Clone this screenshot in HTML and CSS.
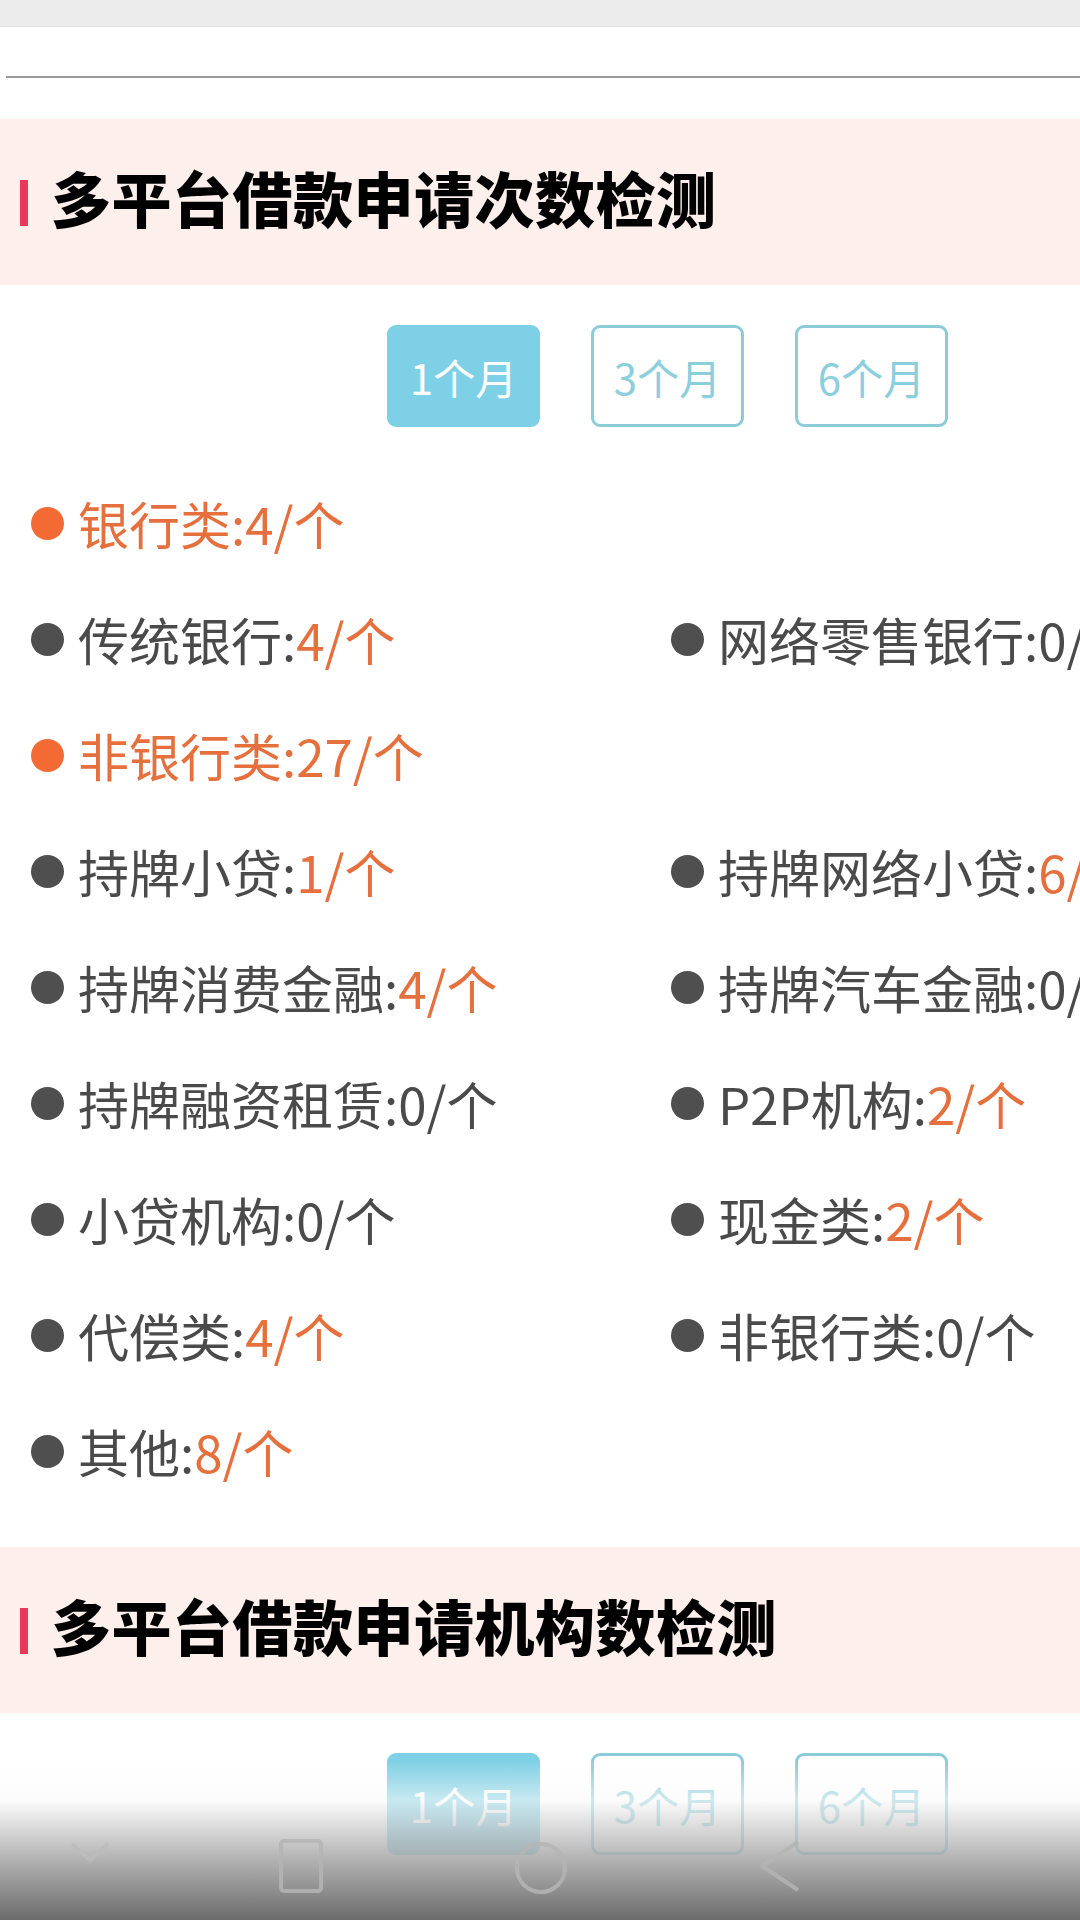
FILE: index.html
```html
<!DOCTYPE html>
<html lang="zh-CN">
<head>
  <meta charset="UTF-8">
  <meta name="viewport" content="width=device-width, initial-scale=1.0">
  <title>多平台借款申请检测</title>
  <link rel="stylesheet" href="styles.css">
</head>
<body>
  <div class="status-strip"></div>
  <div class="top-area">
    <div class="top-line"></div>
  </div>

  <!-- 申请次数 -->
  <div class="section-head">
    <span class="mark"></span>
    <h2>多平台借款申请次数检测</h2>
  </div>
  <div class="tabs">
    <span class="tab active">1个月</span>
    <span class="tab">3个月</span>
    <span class="tab">6个月</span>
  </div>

  <div class="stats">
    <div class="item cat full"><i class="dot"></i>银行类:<em>4/个</em></div>
    <div class="item"><i class="dot"></i>传统银行:<em>4/个</em></div>
    <div class="item"><i class="dot"></i>网络零售银行:0/个</div>
    <div class="item cat full"><i class="dot"></i>非银行类:<em>27/个</em></div>
    <div class="item"><i class="dot"></i>持牌小贷:<em>1/个</em></div>
    <div class="item"><i class="dot"></i>持牌网络小贷:<em>6/个</em></div>
    <div class="item"><i class="dot"></i>持牌消费金融:<em>4/个</em></div>
    <div class="item"><i class="dot"></i>持牌汽车金融:0/个</div>
    <div class="item"><i class="dot"></i>持牌融资租赁:0/个</div>
    <div class="item"><i class="dot"></i>P2P机构:<em>2/个</em></div>
    <div class="item"><i class="dot"></i>小贷机构:0/个</div>
    <div class="item"><i class="dot"></i>现金类:<em>2/个</em></div>
    <div class="item"><i class="dot"></i>代偿类:<em>4/个</em></div>
    <div class="item"><i class="dot"></i>非银行类:0/个</div>
    <div class="item"><i class="dot"></i>其他:<em>8/个</em></div>
  </div>

  <!-- 机构数 -->
  <div class="section-head">
    <span class="mark"></span>
    <h2>多平台借款申请机构数检测</h2>
  </div>
  <div class="tabs">
    <span class="tab active">1个月</span>
    <span class="tab">3个月</span>
    <span class="tab">6个月</span>
  </div>

  <!-- 系统导航栏 -->
  <div class="nav-bar">
    <svg class="nav-icon" style="left:68px" width="44" height="30" viewBox="0 0 44 30">
      <path d="M4 6 L22 22 L40 6" fill="none" stroke="#bdbdbd" stroke-width="4"/>
    </svg>
    <svg class="nav-icon" style="left:278px" width="46" height="56" viewBox="0 0 46 56">
      <rect x="3" y="3" width="40" height="50" rx="3" fill="none" stroke="#b5b5b5" stroke-width="4"/>
    </svg>
    <svg class="nav-icon" style="left:514px" width="54" height="60" viewBox="0 0 54 60">
      <circle cx="27" cy="30" r="24" fill="none" stroke="#b5b5b5" stroke-width="4"/>
    </svg>
    <svg class="nav-icon" style="left:756px" width="46" height="56" viewBox="0 0 46 56">
      <path d="M42 4 L6 28 L42 52" fill="none" stroke="#b5b5b5" stroke-width="4" stroke-linejoin="round"/>
    </svg>
  </div>
</body>
</html>
```

FILE: styles.css
```css
html, body {
  margin: 0;
  padding: 0;
}
body {
  width: 1080px;
  height: 1920px;
  overflow: hidden;
  position: relative;
  background: #fff;
  font-family: "Noto Sans CJK SC", "Noto Sans", sans-serif;
  color: #4a4a4a;
}
.status-strip {
  height: 26px;
  background: #ececec;
  border-bottom: 1px solid #e2e2e2;
}
.top-area {
  height: 92px;
  padding-top: 49px;
  box-sizing: border-box;
}
.top-line {
  margin-left: 6px;
  height: 2px;
  background: #9a9a9a;
}
.section-head {
  height: 166px;
  background: #fdefeb;
  display: flex;
  align-items: center;
}
.section-head .mark {
  width: 8px;
  height: 46px;
  margin-left: 20px;
  margin-right: 23px;
  margin-top: 2px;
  background: #e8385a;
}
.section-head h2 {
  margin: 0 0 12px 0;
  font-size: 60px;
  font-weight: 900;
  letter-spacing: 0.5px;
  color: #000;
}
.tabs {
  display: flex;
  gap: 51px;
  padding-left: 387px;
  margin-top: 40px;
}
.tab {
  width: 153px;
  height: 102px;
  box-sizing: border-box;
  border: 3px solid #8ccbd8;
  border-radius: 9px;
  display: flex;
  align-items: center;
  justify-content: center;
  font-size: 42px;
  font-weight: 400;
  color: #8bcfdc;
}
.tab.active {
  background: #7dd0e5;
  border-color: #7dd0e5;
  color: #fff;
}
.stats {
  display: grid;
  grid-template-columns: 640px 640px;
  padding-left: 31px;
  margin-top: 38px;
  margin-bottom: 38px;
}
.item {
  height: 116px;
  display: flex;
  align-items: center;
  font-size: 51px;
  white-space: nowrap;
  color: #4a4a4a;
}
.item.full {
  grid-column: 1 / 3;
}
.item em {
  font-style: normal;
  color: #e5703d;
}
.dot {
  width: 33px;
  height: 33px;
  border-radius: 50%;
  background: #4f4f4f;
  margin-right: 14px;
  flex-shrink: 0;
}
.item.cat {
  color: #e5703d;
}
.item.cat .dot {
  background: #f46a35;
}
.nav-bar {
  position: absolute;
  left: 0;
  right: 0;
  bottom: 0;
  height: 160px;
  background: linear-gradient(to bottom, rgba(255,255,255,0) 0%, rgba(250,250,250,0.6) 25%, rgba(170,170,170,0.85) 60%, #6c6c6c 100%);
}
.nav-icon {
  position: absolute;
  top: 78px;
  opacity: 0.85;
}
```
